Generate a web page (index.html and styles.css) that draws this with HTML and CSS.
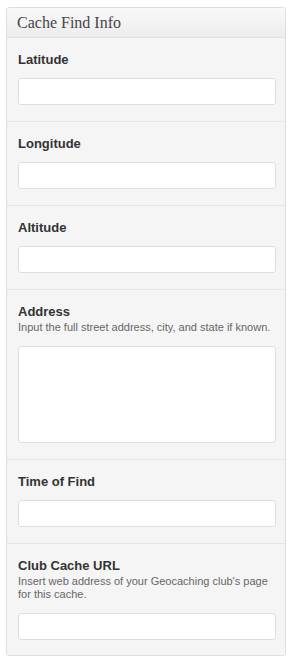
FILE: index.html
```html
<!DOCTYPE html>
<html lang="en">
<head>
  <meta charset="UTF-8" />
  <meta name="viewport" content="width=device-width, initial-scale=1.0"/>
  <title>Cache Find Info</title>
  <link rel="stylesheet" href="styles.css">
</head>
<body>
  <div class="postbox">
    <h3 class="hndle">Cache Find Info</h3>

    <div class="field">
      <label for="latitude">Latitude</label>
      <input type="text" id="latitude" />
    </div>

    <div class="field">
      <label for="longitude">Longitude</label>
      <input type="text" id="longitude" />
    </div>

    <div class="field">
      <label for="altitude">Altitude</label>
      <input type="text" id="altitude" />
    </div>

    <div class="field">
      <label for="address">Address</label>
      <div class="desc">Input the full street address, city, and state if known.</div>
      <textarea id="address"></textarea>
    </div>

    <div class="field">
      <label for="time">Time of Find</label>
      <input type="text" id="time" />
    </div>

    <div class="field">
      <label for="club">Club Cache URL</label>
      <div class="desc">Insert web address of your Geocaching club's page for this cache.</div>
      <input type="text" id="club" />
    </div>
  </div>
</body>
</html>
```

FILE: styles.css
```css
body {
  margin: 0;
  padding: 7px 8px 8px 6px;
  background: #fff;
  font-family: "Liberation Sans", Arial, sans-serif;
}

.postbox {
  border: 1px solid #dfdfdf;
  border-radius: 3px;
  background: #f5f5f5;
  overflow: hidden;
}

.hndle {
  margin: 0;
  height: 29px;
  line-height: 29px;
  padding: 0 10px;
  font-family: "Liberation Serif", "Times New Roman", serif;
  font-size: 16px;
  font-weight: normal;
  color: #464646;
  background: linear-gradient(to bottom, #f9f9f9, #ececec);
  border-bottom: 1px solid #dfdfdf;
}

.field {
  padding: 13px 9px 16px 11px;
  border-bottom: 1px solid #e5e5e5;
}

.field:last-child {
  border-bottom: none;
  padding-bottom: 15px;
}

label {
  display: block;
  font-size: 13px;
  font-weight: bold;
  line-height: 18px;
  color: #333;
}

.desc {
  font-size: 11px;
  line-height: 13px;
  color: #666;
  padding-bottom: 3px;
}

input,
textarea {
  display: block;
  box-sizing: border-box;
  width: 100%;
  margin: 9px 0 0;
  border: 1px solid #dfdfdf;
  border-radius: 3px;
  background: #fff;
  outline: none;
}

input {
  height: 27px;
}

textarea {
  height: 97px;
  resize: none;
}
```
